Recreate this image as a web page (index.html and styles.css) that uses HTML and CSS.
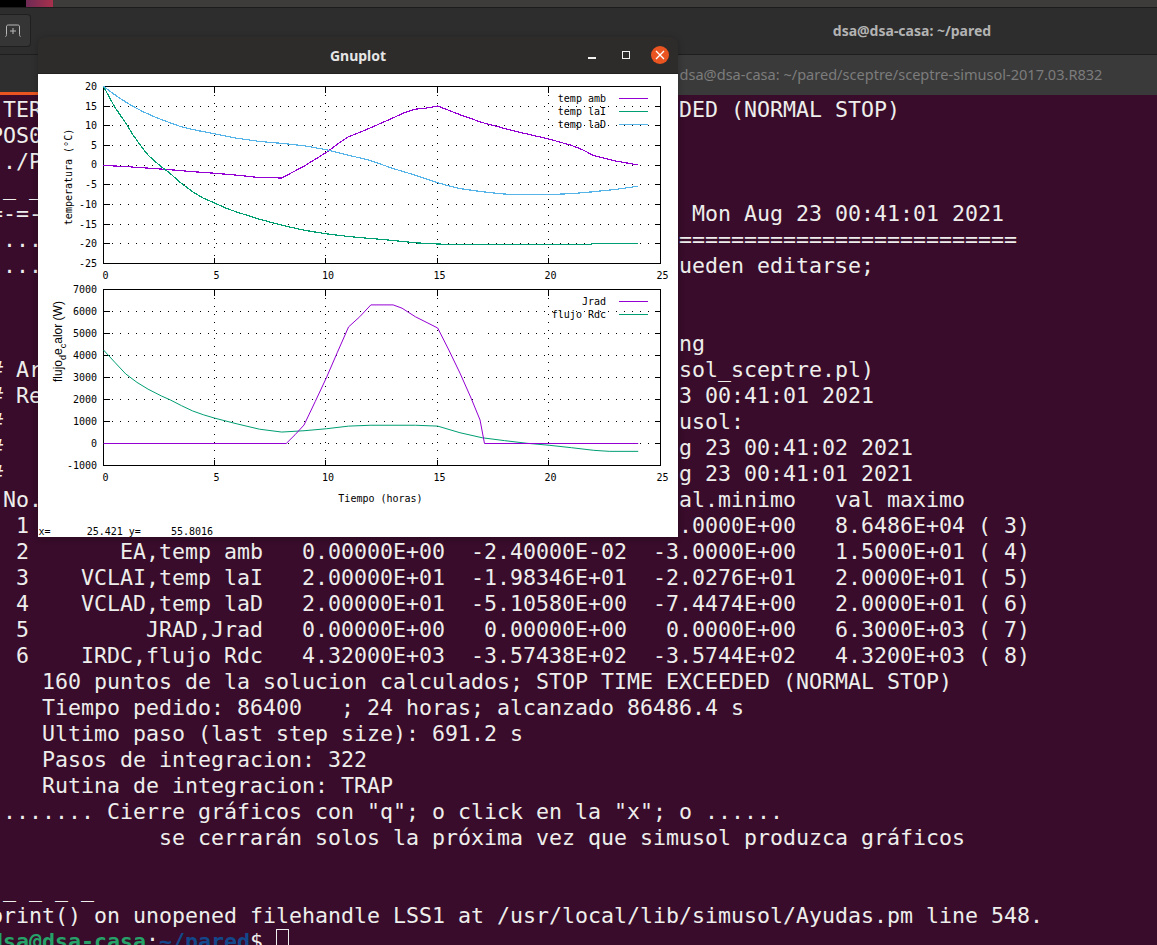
FILE: index.html
```html
<!DOCTYPE html>
<html lang="es">
<head>
<meta charset="utf-8">
<title>Gnuplot sobre terminal</title>
<link rel="stylesheet" href="styles.css">
</head>
<body>
<div class="desktop">
  <div class="topstrip"><span class="strip-black"></span><span class="strip-pink"></span></div>
  <header class="headerbar">
    <div class="newtab">
      <svg class="newtab-icon" width="16" height="13" viewBox="0 0 16 13"><path d="M0.5 12.5C1.5 12.5 1.5 11 1.5 9V3C1.5 1.5 2 1 3.5 1H12.5C14 1 14.5 1.5 14.5 3V9C14.5 11 14.5 12.5 15.5 12.5M8 4V10M5 7H11"/></svg>
    </div>
    <div class="headertitle">dsa@dsa-casa: ~/pared</div>
  </header>
  <nav class="tabs">
    <div class="tab tab-active"></div>
    <div class="tab tab-idle">dsa@dsa-casa: ~/pared/sceptre/sceptre-simusol-2017.03.R832</div>
  </nav>
<pre class="term"> TER                                                 DED (NORMAL STOP)
POS0
 ./P
 _ _
=-=-                                                  Mon Aug 23 00:41:01 2021
 ...                                                 ==========================
 ...                                                 ueden editarse;


                                                     ng
# Ar                                                 sol_sceptre.pl)
# Re                                                 3 00:41:01 2021
#                                                    usol:
#                                                    g 23 00:41:02 2021
#                                                    g 23 00:41:01 2021
 No.                                                 al.minimo   val maximo
  1                                                  .0000E+00   8.6486E+04 ( 3)
  2       EA,temp amb   0.00000E+00  -2.40000E-02  -3.0000E+00   1.5000E+01 ( 4)
  3    VCLAI,temp laI   2.00000E+01  -1.98346E+01  -2.0276E+01   2.0000E+01 ( 5)
  4    VCLAD,temp laD   2.00000E+01  -5.10580E+00  -7.4474E+00   2.0000E+01 ( 6)
  5         JRAD,Jrad   0.00000E+00   0.00000E+00   0.0000E+00   6.3000E+03 ( 7)
  6    IRDC,flujo Rdc   4.32000E+03  -3.57438E+02  -3.5744E+02   4.3200E+03 ( 8)
    160 puntos de la solucion calculados; STOP TIME EXCEEDED (NORMAL STOP)
    Tiempo pedido: 86400   ; 24 horas; alcanzado 86486.4 s
    Ultimo paso (last step size): 691.2 s
    Pasos de integracion: 322
    Rutina de integracion: TRAP
 ....... Cierre gráficos con "q"; o click en la "x"; o ......
             se cerrarán solos la próxima vez que simusol produzca gráficos

 _ _ _ _
print() on unopened filehandle LSS1 at /usr/local/lib/simusol/Ayudas.pm line 548.
<b class="p-green">dsa@dsa-casa</b>:<b class="p-blue">~/pared</b>$ <span class="cursor"> </span></pre>

  <section class="gnuplot">
    <div class="gp-title">
      <span class="gp-name">Gnuplot</span>
      <div class="gp-buttons">
        <span class="gp-min"></span>
        <span class="gp-max"></span>
        <span class="gp-close"><svg width="10" height="10" viewBox="0 0 10 10"><path d="M1 1L9 9M9 1L1 9"/></svg></span>
      </div>
    </div>
    <svg class="gp-canvas" width="640" height="463" viewBox="38 74 640 463">
      <!-- grid -->
      <path class="grid" d="M103.5 106.5H660.5M103.5 125.5H660.5M103.5 145.5H660.5M103.5 165.5H660.5M103.5 184.5H660.5M103.5 204.5H660.5M103.5 224.5H660.5M103.5 243.5H660.5"/>
      <path class="grid" d="M214.5 86.5V263.5M325.5 86.5V263.5M437.5 86.5V263.5M548.5 86.5V263.5"/>
      <path class="grid" d="M103.5 311.5H660.5M103.5 333.5H660.5M103.5 355.5H660.5M103.5 377.5H660.5M103.5 399.5H660.5M103.5 421.5H660.5M103.5 443.5H660.5"/>
      <path class="grid" d="M214.5 289.5V465.5M325.5 289.5V465.5M437.5 289.5V465.5M548.5 289.5V465.5"/>
      <!-- ticks -->
      <path class="frame" d="M103.5 106.5h6M103.5 125.5h6M103.5 145.5h6M103.5 165.5h6M103.5 184.5h6M103.5 204.5h6M103.5 224.5h6M103.5 243.5h6M660.5 106.5h-6M660.5 125.5h-6M660.5 145.5h-6M660.5 165.5h-6M660.5 184.5h-6M660.5 204.5h-6M660.5 224.5h-6M660.5 243.5h-6M214.5 86.5v6M325.5 86.5v6M437.5 86.5v6M548.5 86.5v6M214.5 263.5v-6M325.5 263.5v-6M437.5 263.5v-6M548.5 263.5v-6"/>
      <path class="frame" d="M103.5 311.5h6M103.5 333.5h6M103.5 355.5h6M103.5 377.5h6M103.5 399.5h6M103.5 421.5h6M103.5 443.5h6M660.5 311.5h-6M660.5 333.5h-6M660.5 355.5h-6M660.5 377.5h-6M660.5 399.5h-6M660.5 421.5h-6M660.5 443.5h-6M214.5 289.5v6M325.5 289.5v6M437.5 289.5v6M548.5 289.5v6M214.5 465.5v-6M325.5 465.5v-6M437.5 465.5v-6M548.5 465.5v-6"/>
      <rect class="frame" x="103.5" y="86.5" width="557" height="177"/>
      <rect class="frame" x="103.5" y="289.5" width="557" height="176"/>
      <!-- curves upper -->
      <g transform="translate(103.5 165) scale(22.28 -3.93)">
        <polyline class="curve c-purple" points="0,-0.1 1,-0.4 2,-0.8 3,-1.2 4,-1.7 5,-2.1 6,-2.6 7,-3.2 8,-3.3 9,-0.3 10,3.2 10.5,5.3 11,7.2 11.5,8.3 12,9.5 13,12 13.5,13.3 14,14.2 14.5,14.5 15,15 15.5,13.9 16,12.8 17,10.8 18,9.3 19,7.9 20,6.6 21,5 21.5,3.9 22,2.4 22.5,1.7 23,1 24,0"/>
        <polyline class="curve c-green" points="0,20 0.25,17.4 0.5,14.8 0.75,12.7 1,10.7 1.33,7.6 1.66,5 2,2.5 2.5,0 3,-2.2 3.5,-4.7 4,-6.8 4.5,-8.5 5,-9.7 5.5,-11 6,-12 7,-13.8 8,-15.3 9,-16.6 10,-17.5 11,-18.2 12,-18.7 13,-19.2 14,-19.8 15,-20.1 16,-20.3 21.7,-20.3 22,-20 24,-20"/>
        <polyline class="curve c-blue" points="0,20 0.6,17.5 1.2,15.3 1.8,13.5 2.4,12 3,10.7 3.5,9.7 4.2,8.8 5,7.9 6,6.8 7,6 8,5.5 9,4.9 10,3.9 11,2.5 12,1.1 13,-0.9 14,-2.6 15,-4.5 15.5,-5.3 16,-6 17,-6.8 18,-7.4 19,-7.5 20,-7.5 21,-7.3 22,-6.8 23,-6.2 24,-5.4"/>
      </g>
      <!-- curves lower -->
      <g transform="translate(103.5 443.5) scale(22.28 -0.022)">
        <polyline class="curve curve-thin c-green" points="0,4250 0.5,3700 1,3160 1.5,2780 2,2470 2.6,2160 3,1980 3.5,1720 4,1480 4.5,1300 5,1150 6,890 7,650 8,520 9,580 10,670 11,790 12,830 14,830 15,790 16,490 17,260 18,130 19,10 20,-80 21,-190 22,-310 22.7,-357 24,-357"/>
        <polyline class="curve curve-thin c-purple" points="0,0 8.2,0 8.6,400 9,840 9.5,1900 10,2980 10.5,4150 11,5300 11.5,5760 12,6300 13,6300 13.4,6150 14,5760 15,5250 15.5,4250 16,3200 16.5,2060 16.9,1070 17.1,0 24,0"/>
      </g>
      <!-- y labels upper -->
      <g class="lbl end">
        <text x="97" y="90">20</text><text x="97" y="110">15</text><text x="97" y="129">10</text><text x="97" y="149">5</text><text x="97" y="168">0</text><text x="97" y="188">-5</text><text x="97" y="208">-10</text><text x="97" y="228">-15</text><text x="97" y="247">-20</text><text x="97" y="267">-25</text>
        <text x="97" y="293">7000</text><text x="97" y="315">6000</text><text x="97" y="337">5000</text><text x="97" y="359">4000</text><text x="97" y="381">3000</text><text x="97" y="403">2000</text><text x="97" y="425">1000</text><text x="97" y="447">0</text><text x="97" y="469">-1000</text>
      </g>
      <g class="lbl mid">
        <text x="105.5" y="279">0</text><text x="216.5" y="279">5</text><text x="328" y="279">10</text><text x="439.5" y="279">15</text><text x="550.5" y="279">20</text><text x="662.5" y="279">25</text>
        <text x="105.5" y="481">0</text><text x="216.5" y="481">5</text><text x="328" y="481">10</text><text x="439.5" y="481">15</text><text x="550.5" y="481">20</text><text x="662.5" y="481">25</text>
        <text x="380.5" y="502">Tiempo (horas)</text>
        <text transform="translate(72 177) rotate(-90)">temperatura (°C)</text>
      </g>
      <text class="ylabel-sans" transform="translate(61.5 382) rotate(-90)">flujo<tspan class="sub" dy="4">d</tspan><tspan dy="-4">e</tspan><tspan class="sub" dy="4">c</tspan><tspan dy="-4">alor (W)</tspan></text>
      <!-- legends -->
      <g class="lbl end">
        <text x="606" y="102">temp amb</text><text x="606" y="115">temp laI</text><text x="606" y="128">temp laD</text>
        <text x="606" y="305">Jrad</text><text x="606" y="318">flujo Rdc</text>
      </g>
      <path class="leg c-purple" d="M619 98.5H648"/><path class="leg c-green" d="M619 111.5H648"/><path class="leg c-blue" d="M619 124.5H648"/>
      <path class="leg c-purple" d="M619 301.5H648"/><path class="leg c-green" d="M619 314.5H648"/>
      <text class="lbl status" x="38.5" y="535">x=      25.421 y=     55.8016</text>
    </svg>
  </section>
</div>
</body>
</html>
```

FILE: styles.css
```css
* { box-sizing: border-box; }
html, body { margin: 0; padding: 0; height: 945px; overflow: hidden; background: #380c2a; }
.desktop { position: relative; display: flex; flex-direction: column; width: 1157px; height: 945px; overflow: hidden; font-family: "Noto Sans", sans-serif; }

.topstrip { display: flex; height: 8px; background: #3d3c3b; border-bottom: 1px solid #1c1c1c; flex: none; }
.strip-black { width: 26px; background: #000; }
.strip-pink { width: 27px; background: linear-gradient(90deg, #6e2a55, #a8304c); }

.headerbar { display: flex; align-items: center; height: 47px; flex: none; background: #2d2d2d; border-bottom: 1px solid #1e1e1e; }
.newtab { display: flex; align-items: center; justify-content: flex-end; width: 31px; height: 33px; padding-right: 9px; margin-top: -2px; background: #353535; border: 1px solid #1f1f1f; border-left: 0; border-radius: 0 4px 4px 0; flex: none; }
.newtab-icon { fill: none; stroke: #b8b8b8; stroke-width: 1; }
.headertitle { flex: 1; padding-left: 636px; text-align: center; color: #b3b3b3; font-size: 14px; font-weight: 700; margin-top: -1px; }

.tabs { display: flex; height: 40px; flex: none; }
.tab { display: flex; align-items: center; justify-content: center; }
.tab-active { flex: 1; background: #2f2f2f; border-bottom: 3px solid #e95420; }
.tab-idle { width: 532px; background: #3a3a3a; color: #7c7c7c; font-size: 14.55px; white-space: nowrap; padding-bottom: 2px; }

.term { margin: 2px 0 0 -10px; font-family: "DejaVu Sans Mono", monospace; font-size: 21.6px; line-height: 26px; color: #eeeeec; }
.p-green { color: #26a269; }
.p-blue { color: #12488b; }
.cursor { display: inline-block; width: 13px; height: 26px; vertical-align: top; outline: 1px solid #eeeeec; outline-offset: -1px; }

.gnuplot { position: absolute; left: 38px; top: 37px; width: 640px; height: 500px; display: flex; flex-direction: column; border-radius: 8px 8px 0 0; box-shadow: 0 1px 6px rgba(0,0,0,.25); }
.gp-title { position: relative; display: flex; align-items: center; justify-content: center; height: 37px; flex: none; background: #2e2c2b; border-radius: 8px 8px 0 0; border-bottom: 1px solid #232222; }
.gp-name { color: #e6e6e6; font-size: 14px; font-weight: 700; }
.gp-buttons { position: absolute; right: 9px; top: 9px; display: flex; align-items: center; }
.gp-min { display: block; width: 8px; height: 1px; margin-top: 6px; background: #f2f2f2; box-sizing: content-box; border-bottom: 1px solid #f2f2f2; }
.gp-max { display: block; width: 6px; height: 6px; margin: 0 21px 0 26px; border: 1px solid #f2f2f2; box-sizing: content-box; }
.gp-close { display: flex; align-items: center; justify-content: center; width: 18px; height: 18px; border-radius: 50%; background: #e95420; }
.gp-close path { stroke: #fff; stroke-width: 1.3; fill: none; }
.gp-canvas { display: block; background: #fff; flex: none; }

.grid { fill: none; stroke: #000; stroke-width: 1; stroke-dasharray: 1 7; shape-rendering: crispEdges; }
.frame { fill: none; stroke: #000; stroke-width: 1; shape-rendering: crispEdges; }
.curve { fill: none; stroke-width: 1.2; vector-effect: non-scaling-stroke; stroke-linejoin: round; shape-rendering: crispEdges; }
.curve-thin { stroke-width: 1; }
.leg { fill: none; stroke-width: 1; shape-rendering: crispEdges; }
.c-purple { stroke: #9400d3; }
.c-green { stroke: #009e73; }
.c-blue { stroke: #56b4e9; }
.lbl { font-family: "DejaVu Sans Mono", monospace; font-size: 10px; fill: #000; }
.ylabel-sans { font-family: "Liberation Sans", sans-serif; font-size: 12px; fill: #000; }
.end { text-anchor: end; }
.mid { text-anchor: middle; }
.sub { font-size: 9px; }
.status { white-space: pre; }
```
